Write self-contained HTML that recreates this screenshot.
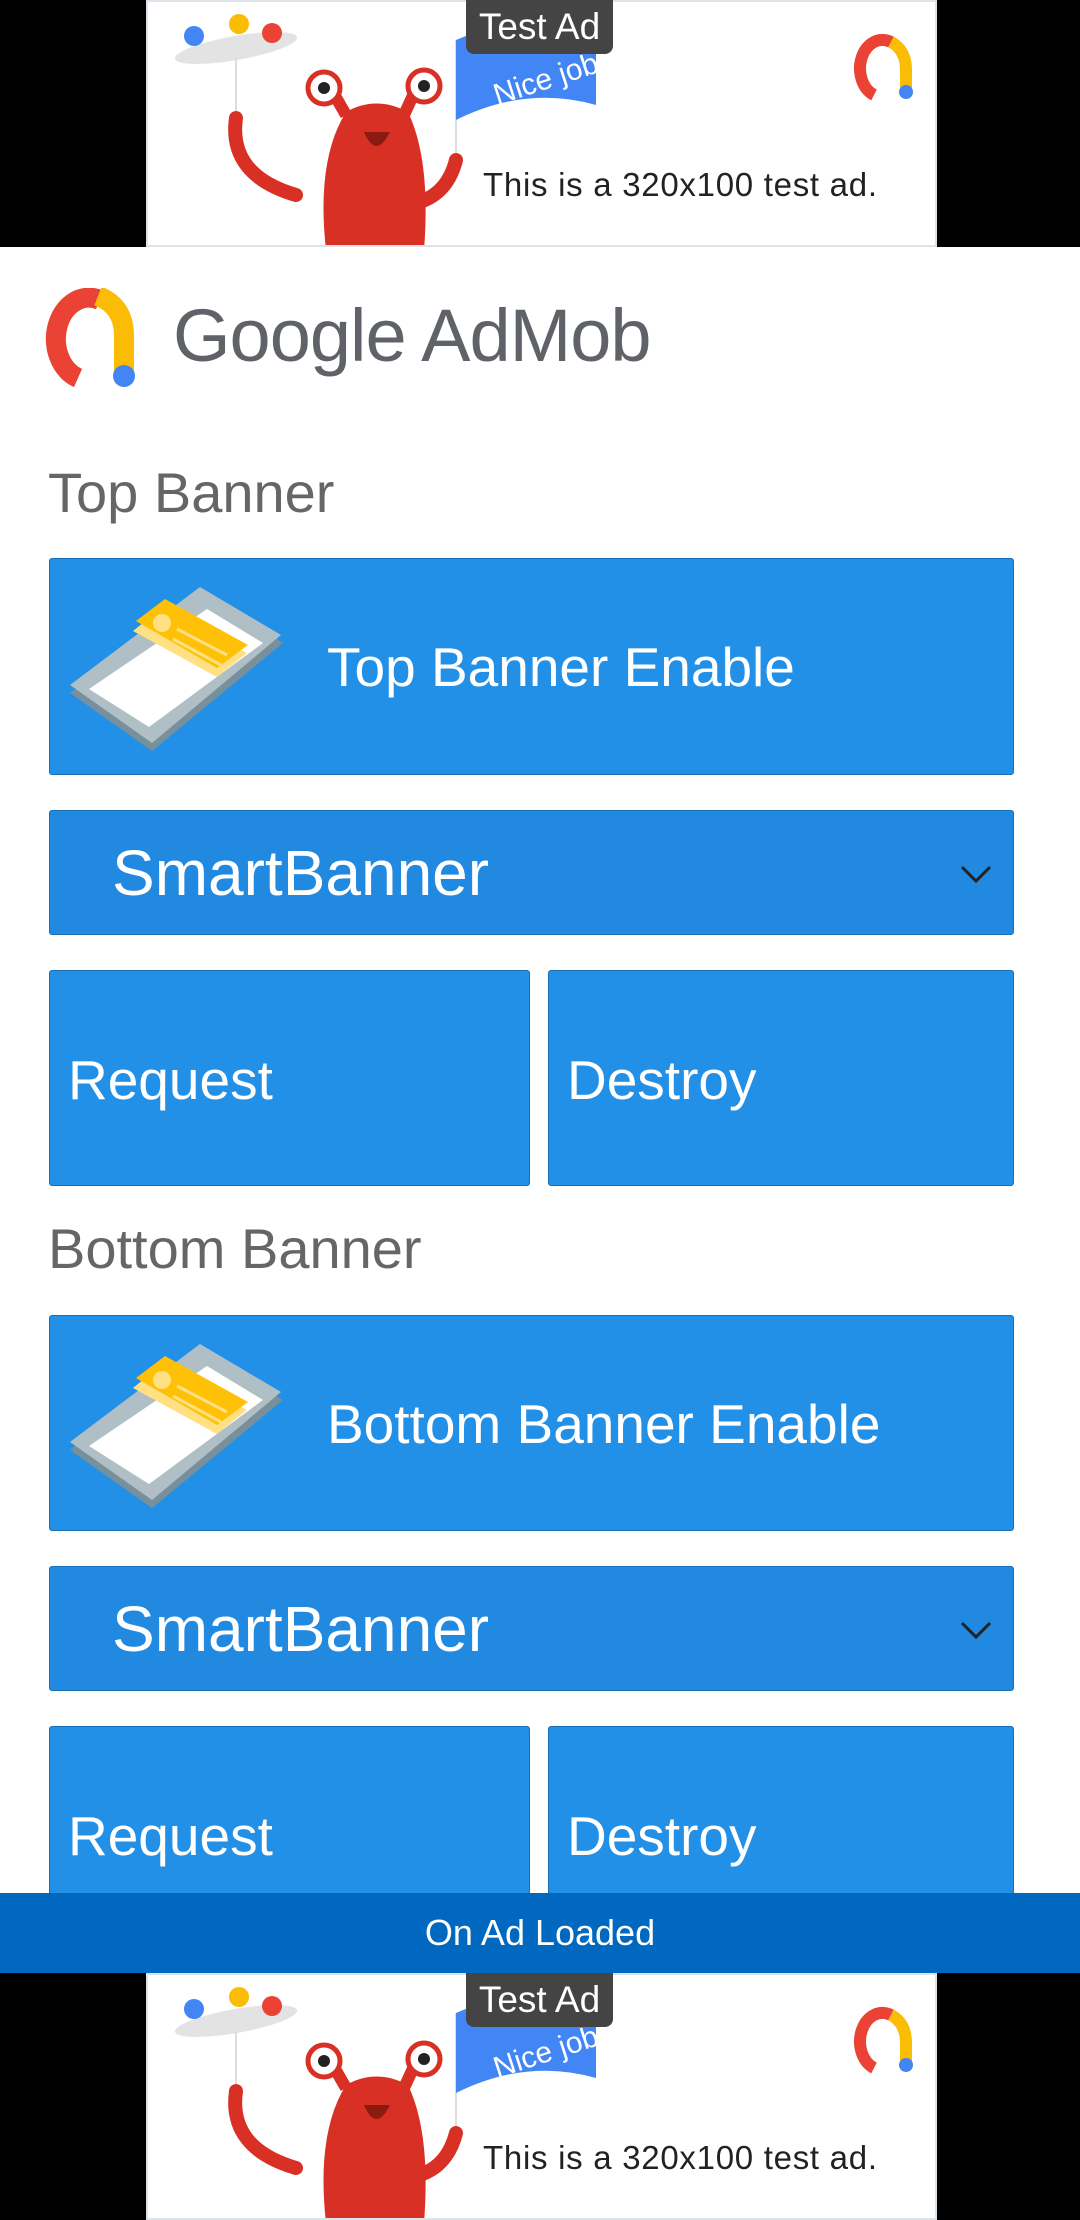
<!DOCTYPE html>
<html><head><meta charset="utf-8"><style>
*{margin:0;padding:0;box-sizing:border-box}
body{width:1080px;height:2220px;background:#fff;position:relative;overflow:hidden;font-family:"Liberation Sans",sans-serif}
.abs{position:absolute}
.ad{position:absolute;left:0;width:1080px;height:247px;background:#000}
.adin{position:absolute;left:146px;top:0;width:791px;height:247px;background:#fff;border:2px solid #dde3e8;overflow:hidden}
.tag{position:absolute;left:466px;top:0;width:147px;height:54px;background:#444;border-radius:0 0 8px 8px;color:#fff;font-size:37px;text-align:center;line-height:54px}
.btn{position:absolute;background:#2390e7;border:1px solid #1a6fb5;border-radius:3px;color:#fff}
.dd{background:#2189e0}
.lbl{position:absolute;left:48px;color:#666;font-size:56px}
.bt{position:absolute;left:18px;top:77px;font-size:55px}
</style></head><body>

<div class="ad" style="top:0">
 <div class="adin">
  <svg width="791" height="247" viewBox="0 0 791 247" style="position:absolute;left:-2px;top:-2px">
   <ellipse cx="90" cy="48" rx="62" ry="12" fill="#e3e3e3" transform="rotate(-10 90 48)"/>
   <circle cx="48" cy="36" r="10" fill="#4285f4"/><circle cx="93" cy="24" r="10" fill="#fbbc05"/><circle cx="126" cy="33" r="10" fill="#ea4335"/>
   <line x1="90" y1="58" x2="90" y2="120" stroke="#ddd" stroke-width="2"/>
   <line x1="310" y1="40" x2="310" y2="160" stroke="#ddd" stroke-width="2"/>
   <path d="M310 40 Q380 10 450 35 L450 105 Q380 85 310 120Z" fill="#4285f4"/>
   <text x="345" y="95" fill="#fff" font-size="30" transform="rotate(-18 380 80)" font-family="Liberation Sans">Nice job!</text>
   <path d="M90 118 Q82 175 150 195" stroke="#d93025" stroke-width="14" fill="none" stroke-linecap="round"/>
   <path d="M310 160 Q300 200 260 205" stroke="#d93025" stroke-width="14" fill="none" stroke-linecap="round"/>
   <path d="M200 115 L180 80 M258 115 L275 78" stroke="#d93025" stroke-width="12"/>
   <path d="M200 112 Q230 95 262 112 Q285 160 278 250 L180 250 Q170 160 200 112Z" fill="#d93025"/>
   <circle cx="178" cy="88" r="16" fill="#fff" stroke="#d93025" stroke-width="5"/><circle cx="178" cy="88" r="6" fill="#222"/>
   <circle cx="278" cy="86" r="16" fill="#fff" stroke="#d93025" stroke-width="5"/><circle cx="278" cy="86" r="6" fill="#222"/>
   <path d="M218 132 Q230 160 244 132Z" fill="#8b1a10"/>
   <text x="337" y="196" fill="#222" font-size="33" font-family="Liberation Sans" textLength="394">This is a 320x100 test ad.</text>
   <path d="M728 95 A22 28 0 1 1 745 42" stroke="#ea4335" stroke-width="12" fill="none"/>
   <path d="M745 42 Q760 50 760 70 L760 92" stroke="#fbbc05" stroke-width="12" fill="none"/>
   <circle cx="760" cy="92" r="7" fill="#4285f4"/>
  </svg>
 </div>
 <div class="tag">Test Ad</div>
</div>

<svg class="abs" style="left:40px;top:288px" width="102" height="100" viewBox="0 0 102 100">
 <path d="M38 90 A32 40 0 1 1 60 12" stroke="#ea4335" stroke-width="20" fill="none"/>
 <path d="M58 8 Q84 18 84 48 L84 86" stroke="#fbbc05" stroke-width="20" fill="none"/>
 <circle cx="84" cy="88" r="11" fill="#4285f4"/>
</svg>
<div class="abs" style="left:173px;top:293px;font-size:74px;color:#5f6368;letter-spacing:-1px">Google AdMob</div>

<div class="lbl" style="top:460px">Top Banner</div>

<div class="btn" style="left:49px;top:558px;width:965px;height:217px">
 <svg class="abs" style="left:17px;top:28px" width="220" height="165" viewBox="0 0 220 165">
  <polygon points="133,4 216,56 85,164 3,106" fill="#78909c"/>
  <polygon points="133,0 214,48 85,156 3,98" fill="#b0bec5"/>
  <polygon points="140,22 196,56 82,140 22,102" fill="#fff"/>
  <polygon points="66,44 96,20 180,66 150,90" fill="#ffe082"/>
  <polygon points="69,34 98,12 181,58 150,81" fill="#ffc107"/>
  <circle cx="95" cy="36" r="9" fill="#ffe082"/>
  <path d="M110 42 L160 68 M106 52 L154 78" stroke="#ffe082" stroke-width="3"/>
 </svg>
 <div class="abs" style="left:277px;top:76px;font-size:55px">Top Banner Enable</div>
</div>

<div class="btn dd" style="left:49px;top:810px;width:965px;height:125px">
 <div class="abs" style="left:62px;top:25px;font-size:64px">SmartBanner</div>
 <svg class="abs" style="left:910px;top:54px" width="32" height="20"><path d="M2 2 L16 16 L30 2" stroke="#222" stroke-width="3" fill="none"/></svg>
</div>

<div class="btn" style="left:49px;top:970px;width:481px;height:216px"><div class="bt">Request</div></div>
<div class="btn" style="left:548px;top:970px;width:466px;height:216px"><div class="bt">Destroy</div></div>

<div class="lbl" style="top:1216px">Bottom Banner</div>

<div class="btn" style="left:49px;top:1315px;width:965px;height:216px">
 <svg class="abs" style="left:17px;top:28px" width="220" height="165" viewBox="0 0 220 165">
  <polygon points="133,4 216,56 85,164 3,106" fill="#78909c"/>
  <polygon points="133,0 214,48 85,156 3,98" fill="#b0bec5"/>
  <polygon points="140,22 196,56 82,140 22,102" fill="#fff"/>
  <polygon points="66,44 96,20 180,66 150,90" fill="#ffe082"/>
  <polygon points="69,34 98,12 181,58 150,81" fill="#ffc107"/>
  <circle cx="95" cy="36" r="9" fill="#ffe082"/>
  <path d="M110 42 L160 68 M106 52 L154 78" stroke="#ffe082" stroke-width="3"/>
 </svg>
 <div class="abs" style="left:277px;top:76px;font-size:55px">Bottom Banner Enable</div>
</div>

<div class="btn dd" style="left:49px;top:1566px;width:965px;height:125px">
 <div class="abs" style="left:62px;top:25px;font-size:64px">SmartBanner</div>
 <svg class="abs" style="left:910px;top:54px" width="32" height="20"><path d="M2 2 L16 16 L30 2" stroke="#222" stroke-width="3" fill="none"/></svg>
</div>

<div class="btn" style="left:49px;top:1726px;width:481px;height:216px"><div class="bt">Request</div></div>
<div class="btn" style="left:548px;top:1726px;width:466px;height:216px"><div class="bt">Destroy</div></div>

<div class="abs" style="left:0;top:1893px;width:1080px;height:80px;background:#0068bf;color:#fff;font-size:36px;text-align:center;line-height:80px">On Ad Loaded</div>

<div class="ad" style="top:1973px">
 <div class="adin">
  <svg width="791" height="247" viewBox="0 0 791 247" style="position:absolute;left:-2px;top:-2px">
   <ellipse cx="90" cy="48" rx="62" ry="12" fill="#e3e3e3" transform="rotate(-10 90 48)"/>
   <circle cx="48" cy="36" r="10" fill="#4285f4"/><circle cx="93" cy="24" r="10" fill="#fbbc05"/><circle cx="126" cy="33" r="10" fill="#ea4335"/>
   <line x1="90" y1="58" x2="90" y2="120" stroke="#ddd" stroke-width="2"/>
   <line x1="310" y1="40" x2="310" y2="160" stroke="#ddd" stroke-width="2"/>
   <path d="M310 40 Q380 10 450 35 L450 105 Q380 85 310 120Z" fill="#4285f4"/>
   <text x="345" y="95" fill="#fff" font-size="30" transform="rotate(-18 380 80)" font-family="Liberation Sans">Nice job!</text>
   <path d="M90 118 Q82 175 150 195" stroke="#d93025" stroke-width="14" fill="none" stroke-linecap="round"/>
   <path d="M310 160 Q300 200 260 205" stroke="#d93025" stroke-width="14" fill="none" stroke-linecap="round"/>
   <path d="M200 115 L180 80 M258 115 L275 78" stroke="#d93025" stroke-width="12"/>
   <path d="M200 112 Q230 95 262 112 Q285 160 278 250 L180 250 Q170 160 200 112Z" fill="#d93025"/>
   <circle cx="178" cy="88" r="16" fill="#fff" stroke="#d93025" stroke-width="5"/><circle cx="178" cy="88" r="6" fill="#222"/>
   <circle cx="278" cy="86" r="16" fill="#fff" stroke="#d93025" stroke-width="5"/><circle cx="278" cy="86" r="6" fill="#222"/>
   <path d="M218 132 Q230 160 244 132Z" fill="#8b1a10"/>
   <text x="337" y="196" fill="#222" font-size="33" font-family="Liberation Sans" textLength="394">This is a 320x100 test ad.</text>
   <path d="M728 95 A22 28 0 1 1 745 42" stroke="#ea4335" stroke-width="12" fill="none"/>
   <path d="M745 42 Q760 50 760 70 L760 92" stroke="#fbbc05" stroke-width="12" fill="none"/>
   <circle cx="760" cy="92" r="7" fill="#4285f4"/>
  </svg>
 </div>
 <div class="tag">Test Ad</div>
</div>

</body></html>
